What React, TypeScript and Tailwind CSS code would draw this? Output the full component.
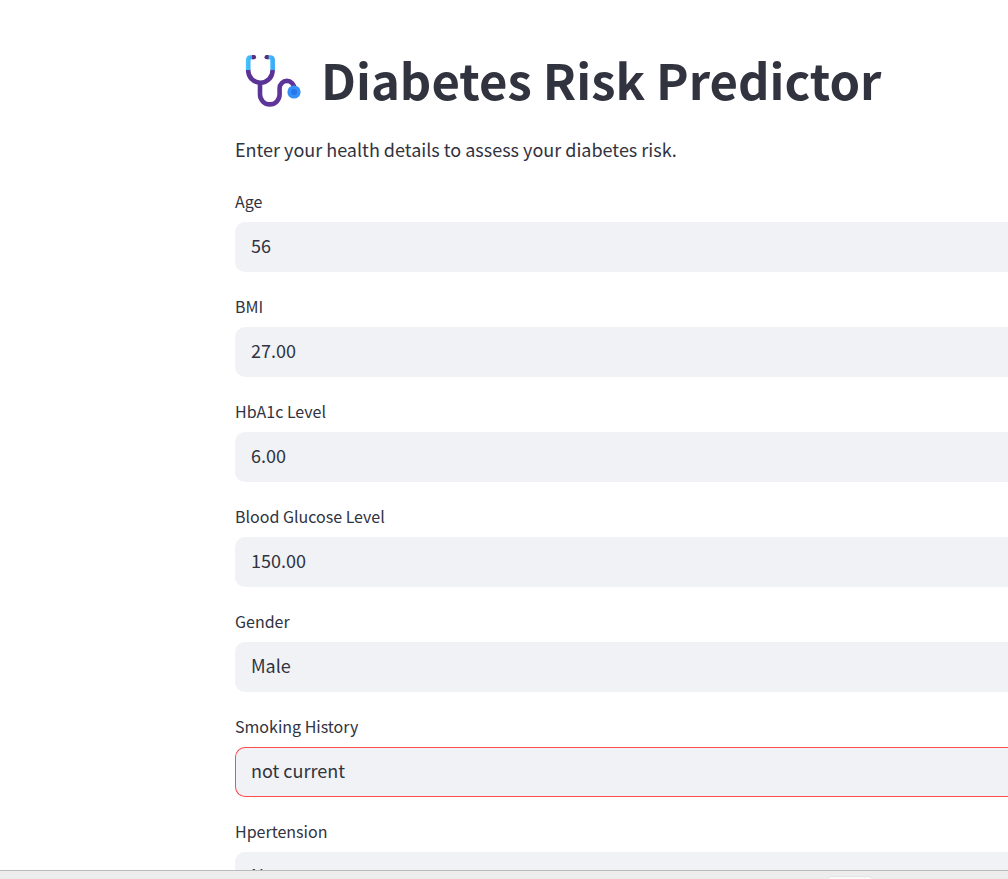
import React from "react";

type Field = {
  id: string;
  label: string;
  value: string;
  options?: string[];
  active?: boolean;
};

const fields: Field[] = [
  { id: "age", label: "Age", value: "56" },
  { id: "bmi", label: "BMI", value: "27.00" },
  { id: "hba1c", label: "HbA1c Level", value: "6.00" },
  { id: "glucose", label: "Blood Glucose Level", value: "150.00" },
  { id: "gender", label: "Gender", value: "Male", options: ["Male"] },
  { id: "smoking", label: "Smoking History", value: "not current", options: ["not current"], active: true },
  { id: "hypertension", label: "Hpertension", value: "No", options: ["No"] },
];

function Stethoscope() {
  return (
    <svg viewBox="0 0 60 56" className="h-14 w-[60px] shrink-0" fill="none" aria-hidden="true">
      <defs>
        <linearGradient id="tube" x1="0" y1="0" x2="1" y2="1">
          <stop offset="0" stopColor="#563494" />
          <stop offset="1" stopColor="#65359f" />
        </linearGradient>
        <linearGradient id="ear" x1="0" y1="0" x2="1" y2="0">
          <stop offset="0" stopColor="#49c4fc" />
          <stop offset="1" stopColor="#35a5f5" />
        </linearGradient>
      </defs>
      <path
        d="M18 30v12.6a9.8 9.8 0 0 0 19.6 0v-6.4a7.3 7.3 0 0 1 14.6 0v2"
        stroke="url(#tube)"
        strokeWidth="4.6"
      />
      <path d="M6.2 17.5v1a12.2 12.2 0 0 0 24.4 0v-1" stroke="#5b3296" strokeWidth="4.6" />
      <path d="M3.9 18V8Q3.9 3.2 8.7 3.2H12V7.2H9.6Q8.5 7.2 8.5 8.2V18Z" fill="url(#ear)" />
      <path d="M32.9 18V8Q32.9 3.2 28.1 3.2H25V7.2H27.2Q28.3 7.2 28.3 8.2V18Z" fill="url(#ear)" />
      <path d="M10 3.1h2a2.1 2.1 0 0 1 0 4.2h-2Z" fill="#553080" />
      <path d="M26.6 3.1h-2a2.1 2.1 0 0 0 0 4.2h2Z" fill="#553080" />
      <circle cx="52" cy="40" r="6.6" fill="#3290f8" />
      <circle cx="52" cy="40" r="3" fill="#2676e8" />
    </svg>
  );
}

function FieldRow({ field }: { field: Field }) {
  const box =
    "h-[50px] w-full appearance-none rounded-l-[10px] border-y border-l bg-[#f0f2f6] pb-[5px] pl-[15px] text-lg text-[#31333f] outline-none " +
    (field.active ? "border-[#ff4b4b]" : "border-[#f0f2f6]");
  return (
    <div className="flex flex-col gap-2.5">
      <label htmlFor={field.id} className="text-base leading-[22px]">
        {field.label}
      </label>
      {field.options ? (
        <select id={field.id} defaultValue={field.value} className={box}>
          {field.options.map((option) => (
            <option key={option}>{option}</option>
          ))}
        </select>
      ) : (
        <input id={field.id} type="text" inputMode="decimal" defaultValue={field.value} className={box} />
      )}
    </div>
  );
}

export default function App() {
  return (
    <div className="flex h-screen flex-col overflow-hidden bg-white font-['Noto_Sans_CJK_SC',sans-serif] text-[#31333f]">
      <main className="min-h-0 flex-1 overflow-hidden pt-11 pl-[235px]">
        <h1 className="flex h-[72px] items-center gap-[19px] pl-[7px] text-[49px] leading-none font-bold whitespace-nowrap">
          <Stethoscope />
          <span className="pb-1">Diabetes Risk Predictor</span>
        </h1>
        <p className="mt-[19px] text-lg leading-7">Enter your health details to assess your diabetes risk.</p>
        <form className="mt-[27px] flex flex-col gap-[23px]">
          {fields.map((field) => (
            <FieldRow key={field.id} field={field} />
          ))}
        </form>
      </main>
      <footer className="flex h-[9px] shrink-0 overflow-hidden border-t border-[#b9bab9] bg-[#ededed] pt-[5px]">
        <div className="ml-[82%] h-4 w-[46px] rounded-t border border-[#e4e4e4] bg-[#f9f9f9]" />
      </footer>
    </div>
  );
}
